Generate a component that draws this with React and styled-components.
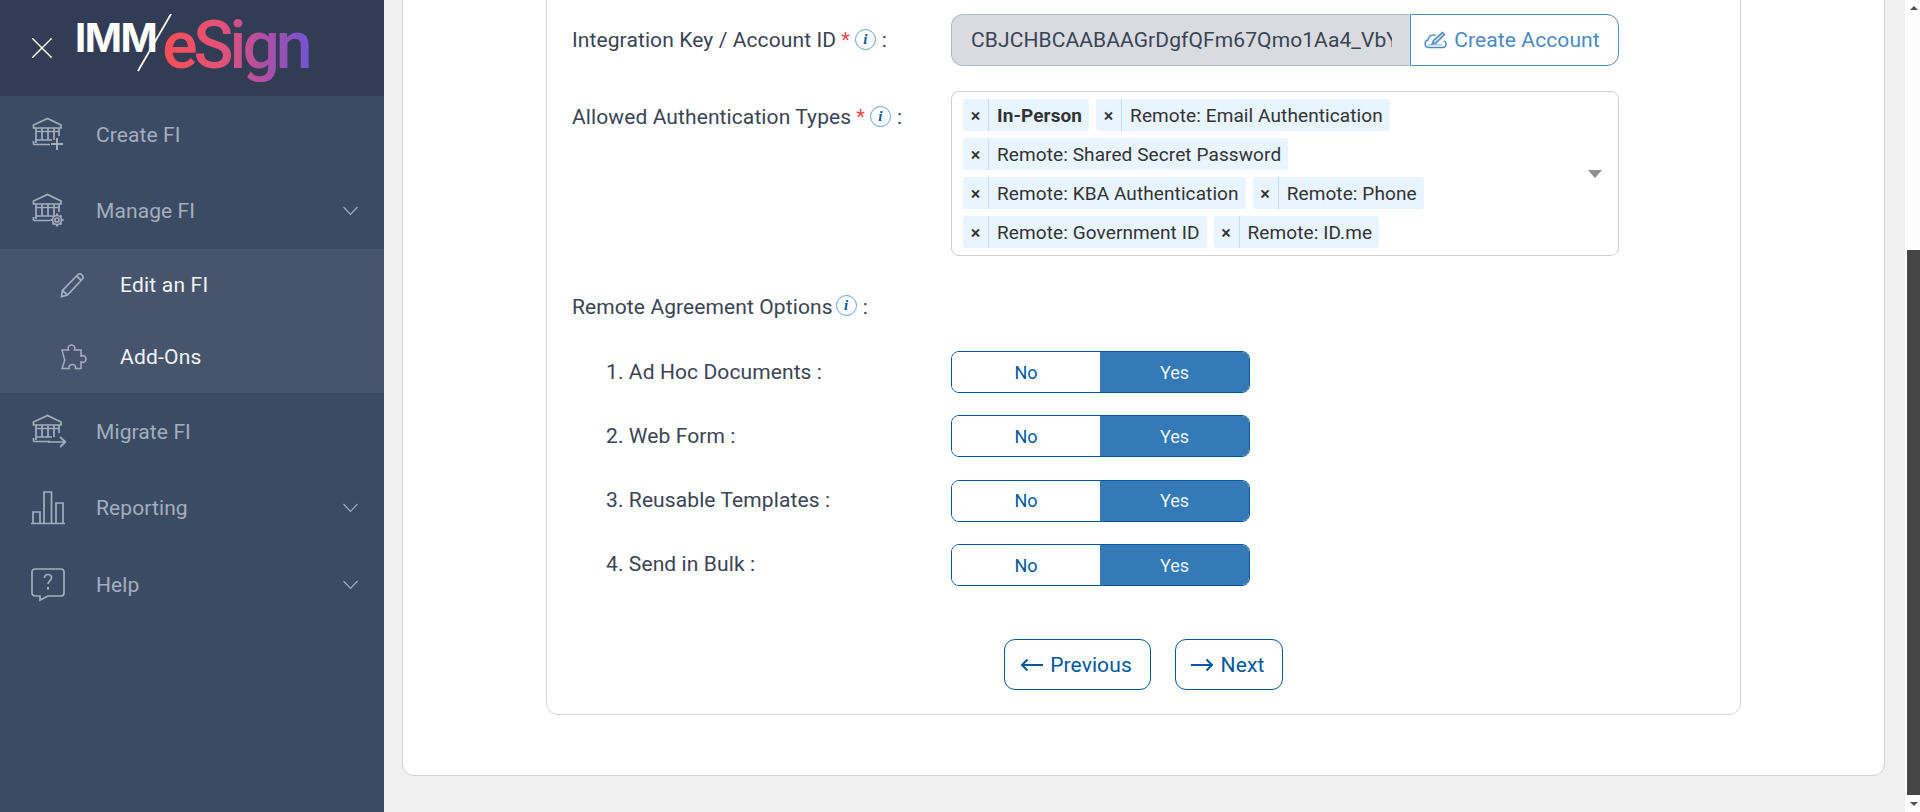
import React from 'react';
import styled, { createGlobalStyle } from 'styled-components';

const GlobalStyle = createGlobalStyle`
  html, body { margin: 0; padding: 0; height: 100%; overflow: hidden; }
  body { font-family: Roboto, "Liberation Sans", sans-serif; background: #f0f0f0; color: #3a4454; letter-spacing: 0.1px; }
  * { box-sizing: border-box; }
`;

const Page = styled.div`
  display: flex;
  width: 1920px;
  height: 812px;
  overflow: hidden;
`;

/* sidebar */
const Sidebar = styled.aside`
  flex: 0 0 384px;
  background: #3c4b64;
  display: flex;
  flex-direction: column;
`;
const SideHead = styled.div`
  height: 96px;
  background: #323d55;
  display: flex;
  align-items: center;
  padding-left: 32px;
  gap: 23px;
`;
const Logo = styled.div`
  position: relative;
  display: flex;
  align-items: center;
  width: 232px;
  height: 96px;
`;
const LogoImm = styled.span`
  font: 700 40px/1 Inter, Roboto, sans-serif;
  letter-spacing: -1.5px;
  color: #fff;
  margin-top: -20px;
`;
const LogoSign = styled.span`
  font: 500 66px/1.1 Roboto, sans-serif;
  letter-spacing: -4px;
  margin-left: 6px;
  margin-top: -4px;
  padding-right: 4px;
  background: linear-gradient(90deg, #ff4d52 0%, #e2517a 40%, #a94fa6 70%, #6f55d8 100%);
  -webkit-background-clip: text;
  background-clip: text;
  color: transparent;
`;
const LogoSlash = styled.svg`
  position: absolute;
  left: 62px;
  top: 14px;
`;
const NavRow = styled.div`
  height: ${p => p.$h}px;
  display: flex;
  align-items: center;
  padding-left: 30px;
  position: relative;
  color: #a3aebd;
  font-size: 21px;
`;
const NavIcon = styled.div`
  width: 66px;
  height: 40px;
  display: flex;
  align-items: center;
`;
const Chevron = styled.svg`
  position: absolute;
  left: 343px;
  top: 50%;
  margin-top: -5px;
`;
const SubMenu = styled.div`
  background: #47556c;
`;
const SubRow = styled.div`
  height: 72px;
  display: flex;
  align-items: center;
  padding-left: 59px;
  color: #f0f2f5;
  font-size: 21px;
  letter-spacing: 0.2px;
`;
const SubIcon = styled.div`
  width: 61px;
  display: flex;
  align-items: center;
`;

/* main */
const Main = styled.main`
  flex: 1;
  height: 812px;
  overflow: hidden;
  display: flex;
  flex-direction: column;
  justify-content: flex-end;
  padding: 0 20px 36px 18px;
`;
const OuterCard = styled.div`
  flex: none;
  background: #fff;
  border: 1px solid #d2d2d2;
  border-radius: 12px;
  padding: 0 143px 60px 143px;
`;
const InnerCard = styled.div`
  border: 1px solid #d4d4d4;
  border-radius: 12px;
  padding: 40px 120px 24px 25px;
`;
const FormRow = styled.div`
  display: flex;
  align-items: flex-start;
  margin-bottom: ${p => p.$mb || 0}px;
`;
const Label = styled.div`
  flex: 0 0 379px;
  padding-left: ${p => p.$indent || 0}px;
  padding-top: ${p => p.$pt || 0}px;
  height: ${p => p.$h || 24}px;
  line-height: 24px;
  font-size: 21px;
  color: #3a4454;
  display: flex;
  align-items: flex-start;
  white-space: nowrap;
`;
const Star = styled.span`
  color: #e8474c;
  font-size: 20px;
  margin-left: 5px;
`;
const Info = styled.span`
  width: 21px;
  height: 21px;
  border: 1px solid #5fa3d6;
  border-radius: 50%;
  margin: ${p => p.$mt ?? 1}px 6px 0 ${p => p.$ml || 5}px;
  display: inline-flex;
  align-items: center;
  justify-content: center;
  font: italic 700 15px/1 "Liberation Serif", serif;
  letter-spacing: 0;
  color: #00599e;
`;
const InputGroup = styled.div`
  display: flex;
  width: 668px;
  height: 52px;
`;
const KeyInput = styled.input`
  width: 459px;
  height: 52px;
  border: 1px solid #b6bbc3;
  border-right: 0;
  border-radius: 12px 0 0 12px;
  background: #d8dbe0;
  padding: 0 18px 0 19px;
  font: 400 21px Roboto, sans-serif;
  letter-spacing: 0.1px;
  color: #3a4454;
  outline: none;
`;
const CreateBtn = styled.button`
  flex: 1;
  border: 1px solid #4a8bc2;
  border-radius: 0 12px 12px 0;
  background: #fff;
  color: #4a8bc2;
  font: 400 21px Roboto, sans-serif;
  letter-spacing: 0.1px;
  display: flex;
  align-items: center;
  justify-content: center;
  gap: 7px;
  padding: 0 5px 0 0;
`;
const MultiSelect = styled.div`
  position: relative;
  width: 668px;
  height: 165px;
  border: 1px solid #cfcfcf;
  border-radius: 8px;
  padding: 7px 50px 7px 11px;
  display: flex;
  flex-wrap: wrap;
  gap: 7px;
  align-content: flex-start;
`;
const Tag = styled.div`
  display: flex;
  height: 32px;
  background: #e8f4ff;
  border-radius: 3px;
  color: #333;
  font-size: 19px;
  font-weight: ${p => (p.$bold ? 700 : 400)};
  line-height: 33px;
`;
const TagX = styled.span`
  width: 26px;
  border-right: 1px solid #bfdcf7;
  text-align: center;
  font-weight: 500;
  font-size: 18px;
  letter-spacing: 0;
`;
const TagText = styled.span`
  padding: 0 7px 0 8px;
`;
const Caret = styled.span`
  position: absolute;
  right: 16px;
  top: 78px;
  border-left: 7px solid transparent;
  border-right: 7px solid transparent;
  border-top: 8px solid #8f8f8f;
`;
const Toggle = styled.div`
  display: flex;
  width: 299px;
  height: 42px;
  border: 1px solid #00599e;
  border-radius: 8px;
  overflow: hidden;
`;
const ToggleOpt = styled.div`
  flex: ${p => (p.$on ? '1' : '0 0 148px')};
  display: flex;
  align-items: center;
  justify-content: center;
  font-size: 18px;
  letter-spacing: 0;
  background: ${p => (p.$on ? '#337ab7' : '#fff')};
  color: ${p => (p.$on ? '#e8f0f7' : '#00599e')};
`;
const Buttons = styled.div`
  display: flex;
  justify-content: center;
  gap: 24px;
  margin: 53px -120px 0 -25px;
`;
const NavBtn = styled.button`
  height: 51px;
  width: ${p => p.$w}px;
  background: #fff;
  border: 1px solid #00599e;
  border-radius: 11px;
  color: #00599e;
  font: 400 21px Roboto, sans-serif;
  letter-spacing: 0.1px;
  display: flex;
  align-items: center;
  justify-content: center;
  gap: 7px;
  padding: 0 3px 0 0;
`;

/* scrollbar */
const ScrollTrack = styled.div`
  position: relative;
  flex: 0 0 15px;
  height: 812px;
  background: #fdfdfd;
`;
const ScrollThumb = styled.div`
  position: absolute;
  left: 2px;
  right: 0;
  top: 250px;
  height: 545px;
  background: #464646;
`;
const ScrollArrow = styled.span`
  position: absolute;
  left: 5px;
  ${p => (p.$up
    ? 'top: 6px; border-bottom: 4px solid #505050;'
    : 'bottom: 6px; border-top: 4px solid #505050;')}
  border-left: 4px solid transparent;
  border-right: 4px solid transparent;
`;

const ICON = { fill: 'none', stroke: '#a3aebd', strokeWidth: 1.7 };

const Bank = ({ children }) => (
  <svg width="36" height="36" viewBox="0 0 36 36" {...ICON}>
    <path d="M3.500 11V8L17.500 1.500 31 8v3z" />
    <path d="M6 11v15M12 11v12M18 11v12M24 11v12M29 11v8" />
    <path d="M6 14.500h23" strokeWidth="1.400" />
    <path d="M6 23h16M3.500 27.500H20M3.500 24v3.500" />
    {children}
  </svg>
);

const Plus = () => <path d="M27 21v12M21 27h12" strokeWidth="2" />;
const Gear = () => (
  <g>
    <circle cx="27" cy="27" r="4.500" fill="#3c4b64" />
    <circle cx="27" cy="27" r="2" />
    <path d="M27 20.500v2M27 31.500v2M20.500 27h2M31.500 27h2M22.500 22.500l1.400 1.400M30.100 30.100l1.400 1.400M22.500 31.500l1.400-1.400M30.100 23.900l1.400-1.400" strokeWidth="2" />
  </g>
);
const ArrowRight = () => <path d="M18 28h17M30 23l5.500 5-5.500 5" />;

const Chart = () => (
  <svg width="36" height="36" viewBox="0 0 36 36" {...ICON}>
    <path d="M1 33.500h34M3 33.500V22h7v11.500M14 33.500V2h7.500v31.500M26 33.500V13h7v20.500" />
  </svg>
);
const HelpIcon = () => (
  <svg width="36" height="36" viewBox="0 0 36 36" {...ICON}>
    <path d="M5 2h26a3 3 0 0 1 3 3v21a3 3 0 0 1-3 3H18l-8 4v-4H5a3 3 0 0 1-3-3V5a3 3 0 0 1 3-3z" />
    <path d="M14.500 11c0-2 1.500-3.500 3.500-3.500s3.500 1.500 3.500 3.300c0 3-3.500 3-3.500 6.200" />
    <path d="M18 20v2.500" strokeWidth="2" />
  </svg>
);
const PenIcon = () => (
  <svg width="26" height="26" viewBox="0 0 26 26" {...ICON}>
    <path d="M2.500 24.500l1-6L18.500 3a3 3 0 0 1 4.500 4.500L8.500 23z" />
    <path d="M3.500 18.500l5 4.500M17.500 4l5 4.500" />
  </svg>
);
const PuzzleIcon = () => (
  <svg width="28" height="28" viewBox="0 0 28 28" fill="none" stroke="#a3aebd" strokeWidth="1.500">
    <path d="M3 7h6.500c-1.200-3 .8-5 3-5s4.200 2 3 5H22v6c3-1.200 5 .8 5 3s-2 4.200-5 3v6.500h-5.500c.6-2.400-1-4-3.200-4s-3.800 1.600-3.200 4H3l2-6c1-2 1-3.500 0-5z" />
  </svg>
);
const ChevronIcon = () => (
  <Chevron width="15" height="10" viewBox="0 0 15 10" fill="none" stroke="#a3aebd" strokeWidth="1.100">
    <path d="M0.500 1 7.500 8.500 14.500 1" />
  </Chevron>
);
const CloudPen = () => (
  <svg width="23" height="18" viewBox="0 0 23 18" fill="none" stroke="#4a8bc2" strokeWidth="1.400">
    <path d="M4.500 16.500h14a3.500 3.500 0 0 0 1.500-6.700M4.500 16.500a3.800 3.800 0 0 1-.5-7.500 5.500 5.500 0 0 1 8-4.500" />
    <path d="M8 13l1.500-3.500L18.500 1.500l2 2-8.500 8.500z" fill="#4a8bc2" fillOpacity="0.35" />
    <path d="M4 13.800h14" strokeOpacity="0.5" />
  </svg>
);
const LeftArrow = () => (
  <svg width="23" height="14" viewBox="0 0 23 14" fill="none" stroke="#00599e" strokeWidth="2">
    <path d="M23 7H2M7.500 1.500 2 7l5.500 5.500" />
  </svg>
);
const RightArrow = () => (
  <svg width="23" height="14" viewBox="0 0 23 14" fill="none" stroke="#00599e" strokeWidth="2">
    <path d="M0 7h21M15.500 1.500 21 7l-5.500 5.500" />
  </svg>
);

const tags = [
  { text: 'In-Person', bold: true },
  { text: 'Remote: Email Authentication' },
  { text: 'Remote: Shared Secret Password' },
  { text: 'Remote: KBA Authentication' },
  { text: 'Remote: Phone' },
  { text: 'Remote: Government ID' },
  { text: 'Remote: ID.me' },
];

const options = ['1. Ad Hoc Documents :', '2. Web Form :', '3. Reusable Templates :', '4. Send in Bulk :'];

export default function App() {
  return (
    <Page>
      <GlobalStyle />
      <Sidebar>
        <SideHead>
          <svg width="20" height="20" viewBox="0 0 20 20" stroke="#fff" strokeWidth="1.400">
            <path d="M0 0l20 20M20 0 0 20" />
          </svg>
          <Logo>
            <LogoImm>IMM</LogoImm>
            <LogoSign>eSign</LogoSign>
            <LogoSlash width="36" height="60" viewBox="0 0 36 60" stroke="#fff" strokeWidth="1.700">
              <path d="M34 0 1 57" />
            </LogoSlash>
          </Logo>
        </SideHead>
        <NavRow $h={77}>
          <NavIcon><Bank><Plus /></Bank></NavIcon>
          Create FI
        </NavRow>
        <NavRow $h={76}>
          <NavIcon><Bank><Gear /></Bank></NavIcon>
          Manage FI
          <ChevronIcon />
        </NavRow>
        <SubMenu>
          <SubRow>
            <SubIcon><PenIcon /></SubIcon>
            Edit an FI
          </SubRow>
          <SubRow>
            <SubIcon><PuzzleIcon /></SubIcon>
            Add-Ons
          </SubRow>
        </SubMenu>
        <NavRow $h={77}>
          <NavIcon><Bank><ArrowRight /></Bank></NavIcon>
          Migrate FI
        </NavRow>
        <NavRow $h={76}>
          <NavIcon><Chart /></NavIcon>
          Reporting
          <ChevronIcon />
        </NavRow>
        <NavRow $h={77}>
          <NavIcon><HelpIcon /></NavIcon>
          Help
          <ChevronIcon />
        </NavRow>
      </Sidebar>

      <Main>
        <OuterCard>
          <InnerCard>
            <FormRow $mb={25}>
              <Label $h={52} $pt={14}>
                Integration Key / Account ID<Star>*</Star><Info>i</Info>:
              </Label>
              <InputGroup>
                <KeyInput disabled value="CBJCHBCAABAAGrDgfQFm67Qmo1Aa4_VbYxT3kLp9sQw" readOnly />
                <CreateBtn><CloudPen />Create Account</CreateBtn>
              </InputGroup>
            </FormRow>
            <FormRow $mb={39}>
              <Label $h={165} $pt={14}>
                Allowed Authentication Types<Star>*</Star><Info>i</Info>:
              </Label>
              <MultiSelect>
                {tags.map(t => (
                  <Tag key={t.text} $bold={t.bold}>
                    <TagX>×</TagX>
                    <TagText>{t.text}</TagText>
                  </Tag>
                ))}
                <Caret />
              </MultiSelect>
            </FormRow>
            <FormRow $mb={32}>
              <Label>
                Remote Agreement Options<Info $ml={3} $mt={0}>i</Info>:
              </Label>
            </FormRow>
            {options.map((o, i) => (
              <FormRow key={o} $mb={i < 3 ? 22.3 : 0}>
                <Label $h={42} $pt={8.4} $indent={34}>{o}</Label>
                <Toggle>
                  <ToggleOpt>No</ToggleOpt>
                  <ToggleOpt $on>Yes</ToggleOpt>
                </Toggle>
              </FormRow>
            ))}
            <Buttons>
              <NavBtn $w={147}><LeftArrow />Previous</NavBtn>
              <NavBtn $w={108}><RightArrow />Next</NavBtn>
            </Buttons>
          </InnerCard>
        </OuterCard>
      </Main>

      <ScrollTrack>
        <ScrollArrow $up />
        <ScrollThumb />
        <ScrollArrow />
      </ScrollTrack>
    </Page>
  );
}
